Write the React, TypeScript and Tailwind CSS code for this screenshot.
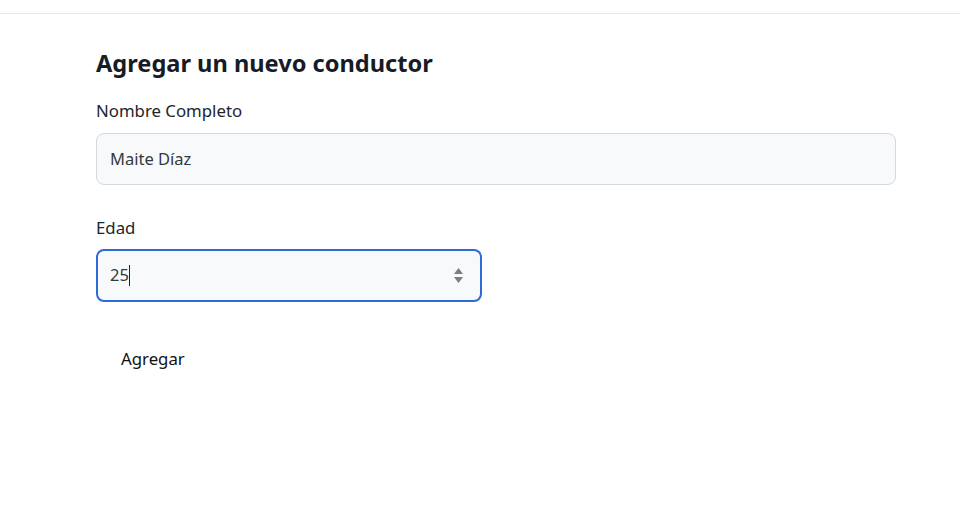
import React from "react";

export default function App() {
  return (
    <div className="min-h-[527px] bg-white" style={{ fontFamily: '"Noto Sans", "Open Sans", sans-serif' }}>
      <div className="h-[14px] border-b border-[#e5e7eb]" />
      <div className="ml-[96px] w-[800px] pt-[33px]">
        <h1 className="text-[23.6px] leading-[32px] font-bold text-[#161b26]">Agregar un nuevo conductor</h1>
        <div className="mt-[20px]">
          <label className="block text-[16.8px] leading-[24px] font-normal text-[#212529]">Nombre Completo</label>
          <div className="mt-[10px] h-[52px] w-full rounded-[8px] border border-[#d5d8dc] bg-[#f8f9fa] pl-[13px] flex items-center text-[16.5px] text-[#343a40]">
            Maite Díaz
          </div>
        </div>
        <div className="mt-[31px]">
          <label className="block text-[16.8px] leading-[24px] font-normal text-[#212529]">Edad</label>
          <div className="mt-[9px] h-[53px] w-[386px] rounded-[8px] border-2 border-[#2e6bd6] bg-[#f8f9fa] pl-[12px] pr-[17px] flex items-center text-[16.5px] text-[#343a40]">
            <span>25</span>
            <span className="inline-block w-px h-[21px] bg-[#222]" />
            <div className="ml-auto flex flex-col items-center gap-[3px]">
              <svg width="9" height="6" viewBox="0 0 9 6"><path d="M4.5 0 L9 6 L0 6 Z" fill="#7d7d7d" /></svg>
              <svg width="9" height="6" viewBox="0 0 9 6"><path d="M0 0 L9 0 L4.5 6 Z" fill="#7d7d7d" /></svg>
            </div>
          </div>
        </div>
        <button className="mt-[35px] ml-0 px-[25px] py-[10px] text-[16.8px] leading-[24px] font-normal text-[#111] bg-transparent">
          Agregar
        </button>
      </div>
    </div>
  );
}
